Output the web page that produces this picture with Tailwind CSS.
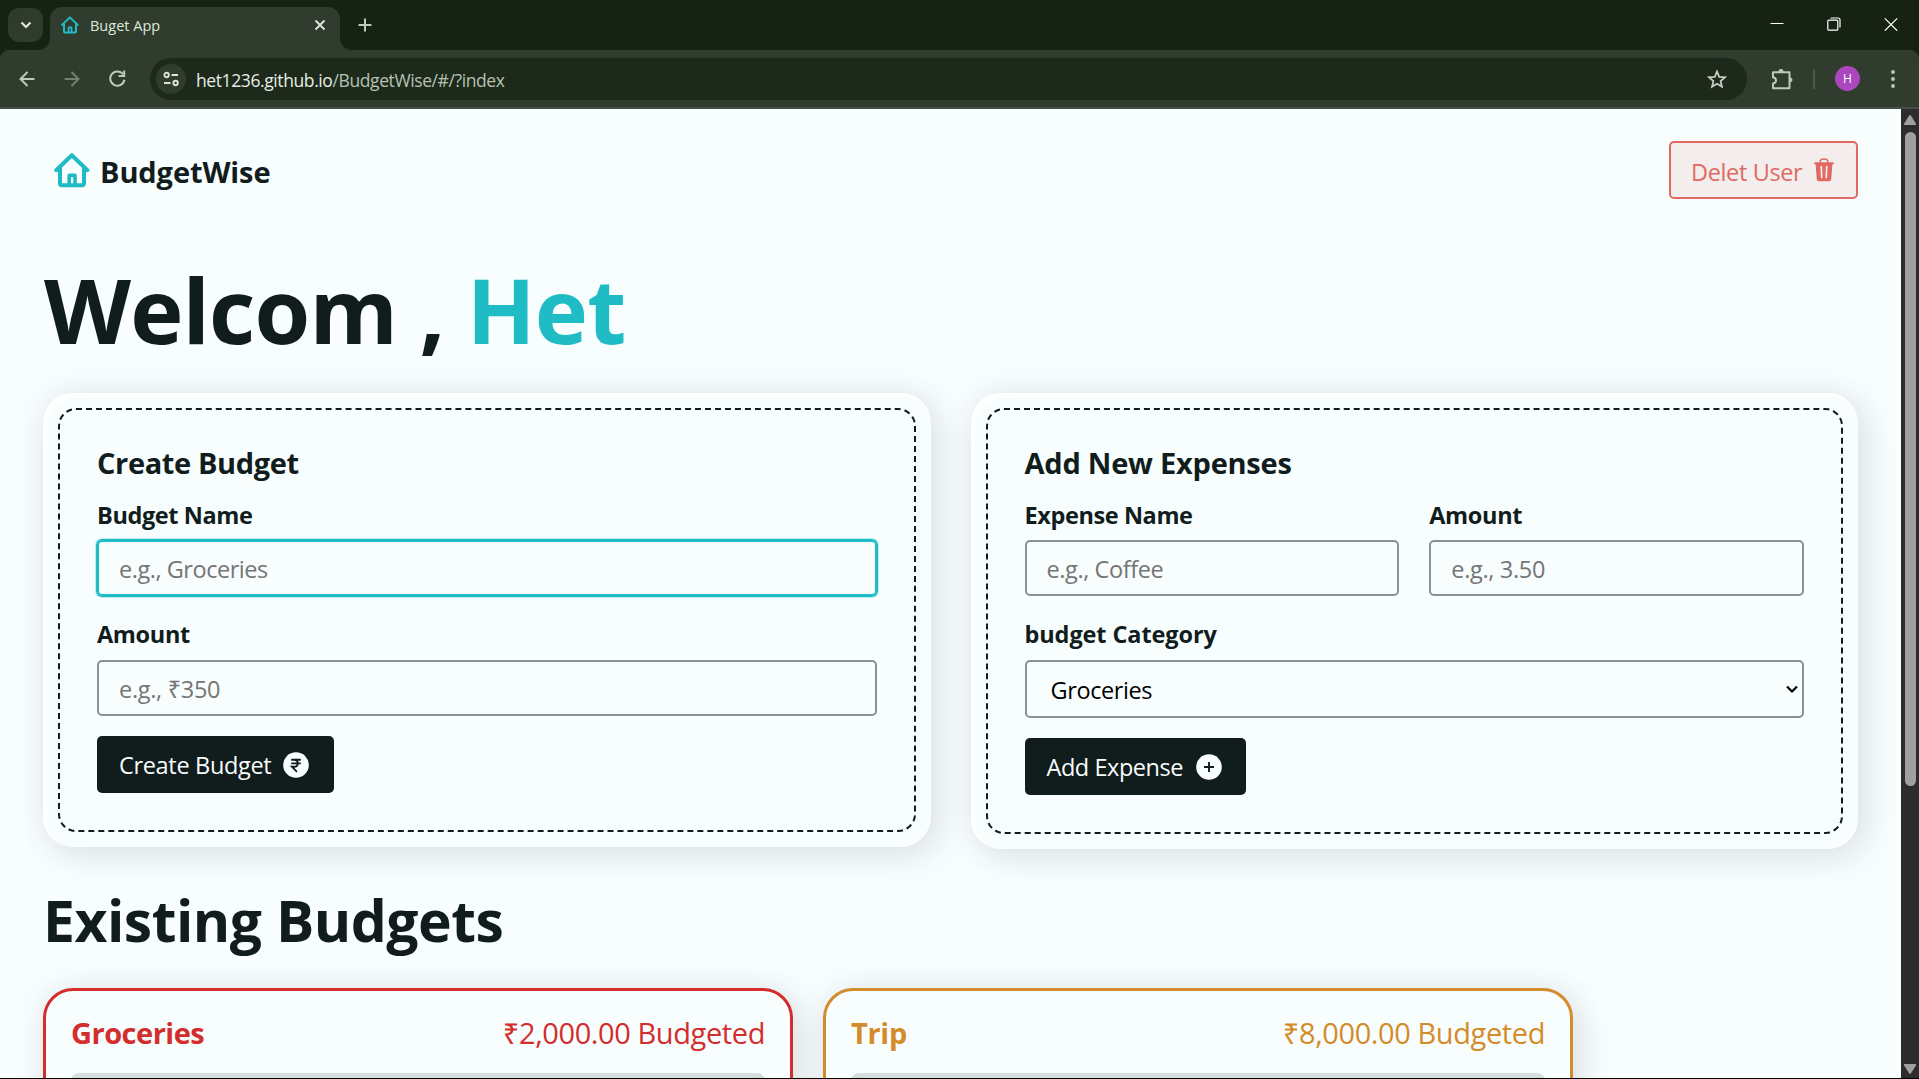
<!DOCTYPE html>
<html lang="en">
<head>
<meta charset="utf-8">
<title>Buget App</title>
<script src="https://cdn.jsdelivr.net/npm/@tailwindcss/browser@4"></script>
</head>
<body class="h-[1079px] w-[1919px] overflow-hidden bg-black font-['Open_Sans','Noto_Sans',sans-serif] text-[#111c1c]">
<svg class="hidden">
  <symbol id="home" viewBox="0 0 36 35">
    <g fill="none" stroke="#1fbcc5" stroke-width="4" stroke-linecap="round" stroke-linejoin="round"><path d="M2.2 17.2 17.8 2.2 33.4 17.2"/><path d="M6 14.5V30.5a1.8 1.8 0 0 0 1.8 1.8H28.2A1.8 1.8 0 0 0 30 30.5V14.5"/><path d="M15.2 32V22.4h5.800V32" stroke-width="3.600"/></g>
  </symbol>
</svg>

<div class="relative flex h-[50px] items-stretch bg-[#162313]">
  <div class="mt-2 ml-2 flex h-[34px] w-[35px] items-center justify-center rounded-[11px] bg-[#2f3c2d]">
    <svg class="size-3" viewBox="0 0 12 12" fill="none" stroke="#e0e8da" stroke-width="2.200"><path d="M1.500 3.500 6 8 10.500 3.500"/></svg>
  </div>
  <div class="relative mt-[7px] ml-[7px] flex w-[290px] items-center rounded-t-[12px] bg-[#303d2e] pb-[7px] pl-[11px]">
    <svg class="absolute bottom-0 -left-3 size-3" viewBox="0 0 12 12"><path fill="#303d2e" d="M12 0v12H0A12 12 0 0 0 12 0z"/></svg>
    <svg class="absolute -right-3 bottom-0 size-3" viewBox="0 0 12 12"><path fill="#303d2e" d="M0 0v12h12A12 12 0 0 1 0 0z"/></svg>
    <svg class="size-[18px]"><use href="#home"/></svg>
    <span class="ml-[11px] pt-[2px] text-[14.500px] leading-5 whitespace-nowrap text-[#dfe6da]">Buget App</span>
    <svg class="absolute top-[12px] left-[264px] size-3" viewBox="0 0 12 12" fill="none" stroke="#e0e6db" stroke-width="1.800"><path d="M1.500 1.500l9 9M10.500 1.500l-9 9"/></svg>
  </div>
  <svg class="mt-[18px] ml-[18px] size-[14px]" viewBox="0 0 14 14" fill="none" stroke="#bccdb4" stroke-width="2"><path d="M7 .5v13M.5 7h13"/></svg>
  <div class="mr-[21px] ml-auto flex gap-[43px] pt-[17px] text-white">
    <svg class="size-[14px]" viewBox="0 0 14 14" stroke="currentColor"><path d="M.5 6.500h13"/></svg>
    <svg class="size-[14px]" viewBox="0 0 14 14" fill="none" stroke="currentColor" stroke-width="1.200"><rect x=".8" y="3.200" width="10" height="10" rx="1"/><path d="M3.500 1h7.500a2 2 0 0 1 2 2v7.500"/></svg>
    <svg class="size-[14px]" viewBox="0 0 14 14" stroke="currentColor" stroke-width="1.200"><path d="M.8 1.300l12.400 12.400M13.200 1.300.8 13.700"/></svg>
  </div>
</div>

<div class="bg-[#162313]">
<div class="flex h-[59px] items-center rounded-t-[9px] border-b-2 border-[#4a4c46] bg-[#303d2e] pl-5">
  <svg class="size-4 -ml-px" viewBox="0 0 16 16" fill="none" stroke="#bccdb4" stroke-width="2"><path d="M15.500 8H2M8.500 1 1.500 8l7 7"/></svg>
  <svg class="ml-[29px] size-4" viewBox="0 0 16 16" fill="none" stroke="#72806d" stroke-width="2"><path d="M.5 8H14M7.500 1l7 7-7 7"/></svg>
  <svg class="ml-[29px] size-[17px]" viewBox="0 0 16 16" fill="none" stroke="#bccdb4" stroke-width="1.900"><path d="M14.500 9.200A6.700 6.700 0 1 1 13.200 4"/><path d="M9 5.700h5.300V.5"/></svg>
  <div class="ml-[24px] flex h-[42px] w-[1597px] items-center rounded-full bg-[#1d291b] pl-[6px]">
    <div class="flex size-[30px] items-center justify-center rounded-full bg-[#303d2e]">
      <svg class="size-4" viewBox="0 0 16 16" fill="none" stroke="#dbe5d5" stroke-width="1.900"><circle cx="3.600" cy="4" r="2.200"/><path d="M8.500 4h6.500M1 12h6.500"/><circle cx="12.600" cy="12" r="2.200"/></svg>
    </div>
    <span class="ml-[10px] pt-[2px] text-[17.500px] leading-6 tracking-[-0.400px] whitespace-nowrap text-[#b6c2b1]"><span class="text-[#e6eee2]">het1236.github.io</span>/BudgetWise/#/?index</span>
    <svg class="mr-[20px] ml-auto size-5" viewBox="0 0 20 20" fill="none" stroke="#c6cfc2" stroke-width="1.800"><path d="M10 2.500l2.200 5.300 5.700.5-4.300 3.800 1.300 5.600L10 14.700l-4.900 3 1.300-5.600L2.100 8.300l5.700-.5z"/></svg>
  </div>
  <svg class="ml-[24px] size-[22px]" viewBox="0 0 22 22" fill="none" stroke="#bccdb4" stroke-width="2"><path d="M2 4.200h16.500v16H2v-4.800a3 3 0 0 0 0-6z" stroke-linejoin="round"/><path d="M7.800 3.500a2.200 2.200 0 0 1 4.400 0zM19 9.800a2.100 2.100 0 0 1 0 4.200z" fill="#bccdb4" stroke-width=".8"/></svg>
  <div class="ml-[20px] h-5 w-[2px] bg-[#4b5a47]"></div>
  <div class="ml-5 flex size-[25px] items-center justify-center rounded-full bg-[#ab47bc] text-[12px] text-white">H</div>
  <svg class="ml-[30px] h-5 w-[6px]" viewBox="0 0 6 20" fill="#bccdb4"><circle cx="3" cy="3" r="1.900"/><circle cx="3" cy="10" r="1.900"/><circle cx="3" cy="17" r="1.900"/></svg>
</div>
</div>

<div class="flex h-[969px] overflow-hidden">
  <main class="w-[1901px] overflow-hidden bg-[#f8fdfd] px-[43px] pt-8">
    <header class="flex h-[58px] items-center justify-between">
      <div class="flex items-center pl-[11px]">
        <svg class="h-[35px] w-9"><use href="#home"/></svg>
        <span class="ml-[10px] pt-[3px] text-[29px] leading-10 font-bold tracking-[-0.100px] whitespace-nowrap">BudgetWise</span>
      </div>
      <button class="flex h-[58px] w-[189px] items-center rounded-[5px] border-2 border-[#e06a62] bg-[#f3eded] pl-5 text-[#e06a62]">
        <span class="w-[123px] pt-[3px] text-left text-[23.500px] leading-9 tracking-[-0.370px] whitespace-nowrap">Delet User</span>
        <svg class="h-6 w-5" viewBox="0 0 20 24" fill="currentColor"><path d="M1 4.300h18a.8.800 0 0 1 0 2h-.6l-1.200 15A2.200 2.200 0 0 1 15 23.200H5a2.200 2.200 0 0 1-2.200-1.900l-1.200-15H1a.8.800 0 0 1 0-2z"/><path d="M5.800 4.500C6 2 7.500 1 10 1s4 1 4.200 3.500" fill="none" stroke="currentColor" stroke-width="1.500"/><path d="M7.300 8.500l.4 11M12.700 8.500l-.4 11" stroke="#f3eded" stroke-width="1.700" stroke-linecap="round"/></svg>
      </button>
    </header>

    <h1 class="mt-[60px] ml-px w-fit text-[90px] leading-[100px] font-bold tracking-[-0.850px] whitespace-nowrap">Welcom , <span class="text-[#1fbcc5]">Het</span></h1>

    <div class="mt-[34px] grid grid-cols-2 items-start gap-10">
      <section class="rounded-[30px] bg-[#f8fdfd] p-[15px] shadow-[inset_4px_4px_0_#ffffff,0_0_30px_rgba(90,90,150,0.100),10px_10px_35px_rgba(20,30,50,0.080)]">
        <form class="rounded-[18px] border-2 border-dashed border-[#111c1c] px-[37px] pt-[33px] pb-[37px]">
          <h2 class="w-fit text-[29px] leading-10 font-bold tracking-[-0.380px] whitespace-nowrap">Create Budget</h2>
          <label class="mt-[15px] block w-fit text-[23.500px] leading-[34px] font-bold tracking-[-0.390px] whitespace-nowrap">Budget Name</label>
          <div class="mt-2 flex h-14 items-center rounded-[5px] border-2 border-[#1fbcc5] pl-5 text-[23.500px] text-[#757575] shadow-[0_0_0_1px_#1fbcc5,0_0_0_2px_#b9ecee]"><span class="pt-[3px] tracking-[-0.460px] whitespace-nowrap">e.g., Groceries</span></div>
          <label class="mt-[21px] block w-fit text-[23.500px] leading-[34px] font-bold tracking-[-0.350px] whitespace-nowrap">Amount</label>
          <div class="mt-[9px] flex h-14 items-center rounded-[5px] border-2 border-[#829494] pl-5 text-[23.500px] text-[#757575]"><span class="pt-[3px] tracking-[-0.300px] whitespace-nowrap">e.g., ₹350</span></div>
          <button class="mt-5 flex h-[57px] w-[237px] items-center rounded-[5px] bg-[#111c1c] pl-[22px] text-[23.500px] text-[#f8fdfd]">
            <span class="w-[164px] pt-[3px] text-left tracking-[-0.330px] whitespace-nowrap">Create Budget</span>
            <svg class="size-[26px]" viewBox="0 0 26 26"><circle cx="13" cy="13" r="12.800" fill="#f8fdfd"/><path d="M8.200 7.800h9.600M8.200 11.400h9.600M8.200 7.800h3c4.700 0 4.700 7 0 7H9l5 5" fill="none" stroke="#111c1c" stroke-width="1.900"/></svg>
          </button>
        </form>
      </section>

      <section class="rounded-[30px] bg-[#f8fdfd] p-[15px] shadow-[inset_4px_4px_0_#ffffff,0_0_30px_rgba(90,90,150,0.100),10px_10px_35px_rgba(20,30,50,0.080)]">
        <form class="rounded-[18px] border-2 border-dashed border-[#111c1c] px-[37px] pt-[33px] pb-[37px]">
          <h2 class="w-fit text-[29px] leading-10 font-bold tracking-[-0.230px] whitespace-nowrap">Add New Expenses</h2>
          <div class="mt-[15px] grid grid-cols-2 gap-[30px]">
            <div>
              <label class="block w-fit text-[23.500px] leading-[34px] font-bold tracking-[-0.400px] whitespace-nowrap">Expense Name</label>
              <div class="mt-2 flex h-14 items-center rounded-[5px] border-2 border-[#829494] pl-5 text-[23.500px] text-[#757575]"><span class="pt-[3px] tracking-[-0.400px] whitespace-nowrap">e.g., Coffee</span></div>
            </div>
            <div>
              <label class="block w-fit text-[23.500px] leading-[34px] font-bold tracking-[-0.350px] whitespace-nowrap">Amount</label>
              <div class="mt-2 flex h-14 items-center rounded-[5px] border-2 border-[#829494] pl-5 text-[23.500px] text-[#757575]"><span class="pt-[3px] tracking-[-0.320px] whitespace-nowrap">e.g., 3.50</span></div>
            </div>
          </div>
          <label class="mt-[21px] block w-fit text-[23.500px] leading-[34px] font-bold tracking-[-0.100px] whitespace-nowrap">budget Category</label>
          <div class="mt-[9px] flex h-[58px] items-center justify-between rounded-[5px] border-2 border-[#829494] pr-[4px] pl-6 text-[23.500px] text-black"><span class="pt-[3px] tracking-[-0.400px] whitespace-nowrap">Groceries</span>
            <svg class="size-3" viewBox="0 0 12 12" fill="none" stroke="#000" stroke-width="2.200"><path d="M1 3.500 6 8.500 11 3.500"/></svg>
          </div>
          <button class="mt-5 flex h-[57px] w-[221px] items-center rounded-[5px] bg-[#111c1c] pl-[22px] text-[23.500px] text-[#f8fdfd]">
            <span class="w-[149px] pt-[3px] text-left tracking-[-0.450px] whitespace-nowrap">Add Expense</span>
            <svg class="size-[26px]" viewBox="0 0 26 26"><circle cx="13" cy="13" r="12.800" fill="#f8fdfd"/><path d="M13 8v10M8 13h10" stroke="#111c1c" stroke-width="1.900"/></svg>
          </button>
        </form>
      </section>
    </div>

    <h2 class="mt-[31px] w-fit text-[57px] leading-[80px] font-bold tracking-[-0.480px] whitespace-nowrap">Existing Budgets</h2>
    <div class="mt-7 flex gap-[30px]">
      <article class="h-[300px] w-[750px] rounded-[30px] border-3 border-[#d32d2d] bg-[#f8fdfd] px-[25px] pt-[22px] text-[#d32d2d] shadow-[0_0_30px_rgba(90,90,150,0.100),10px_10px_35px_rgba(20,30,50,0.080)]">
        <div class="flex justify-between text-[29px] leading-10 whitespace-nowrap"><h3 class="font-bold tracking-[-0.500px]">Groceries</h3><p class="tracking-[-0.400px]">₹2,000.00 Budgeted</p></div>
        <div class="mt-5 h-5 rounded-[8px] bg-[#d3dfdf]"></div>
      </article>
      <article class="h-[300px] w-[750px] rounded-[30px] border-3 border-[#d48c2b] bg-[#f8fdfd] px-[25px] pt-[22px] text-[#d48c2b] shadow-[0_0_30px_rgba(90,90,150,0.100),10px_10px_35px_rgba(20,30,50,0.080)]">
        <div class="flex justify-between text-[29px] leading-10 whitespace-nowrap"><h3 class="font-bold tracking-[-0.300px]">Trip</h3><p class="tracking-[-0.400px]">₹8,000.00 Budgeted</p></div>
        <div class="mt-5 h-5 rounded-[8px] bg-[#d3dfdf]"></div>
      </article>
    </div>
  </main>
  <div class="flex w-[18px] flex-col items-center bg-[#2c2c2c] pt-[6px]">
    <svg class="h-[10px] w-3" viewBox="0 0 12 10" fill="#a0a0a0"><path d="M5 .8a1.200 1.200 0 0 1 2 0l5 8a.8.800 0 0 1-.6 1.200H.6A.8.800 0 0 1 0 8.800z"/></svg>
    <div class="mt-[7px] h-[654px] w-[11px] rounded-full bg-[#a0a0a0]"></div>
    <svg class="mt-auto mb-[4px] h-[10px] w-3" viewBox="0 0 12 10" fill="#a0a0a0"><path d="M5 9.200a1.200 1.200 0 0 0 2 0l5-8A.8.800 0 0 0 11.400 0H.6A.8.800 0 0 0 0 1.200z"/></svg>
  </div>
</div>
</body>
</html>
